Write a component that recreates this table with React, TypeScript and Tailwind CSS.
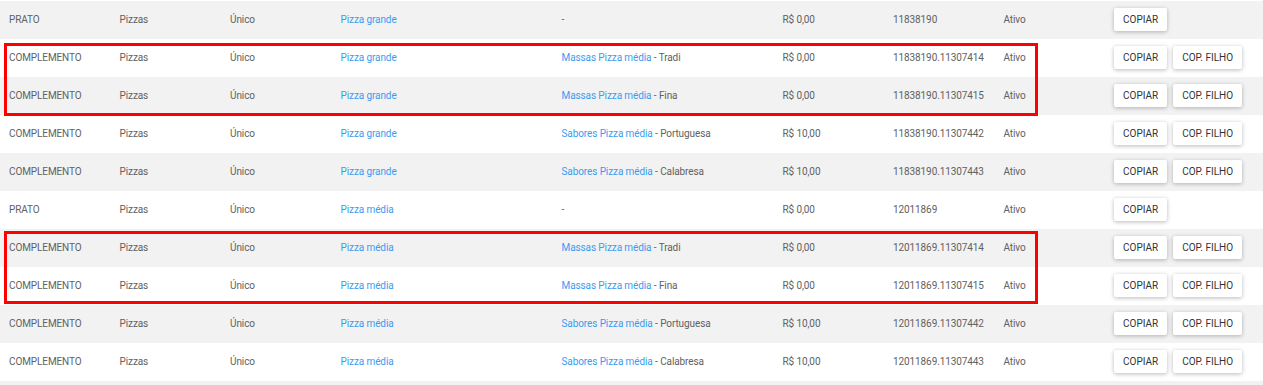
import React from "react";

type Row = {
	tipo: string;
	parent: string;
	item?: { group: string; name: string };
	preco: string;
	codigo: string;
	filho: boolean;
};

const rows: Row[] = [
	{ tipo: "PRATO", parent: "Pizza grande", preco: "R$ 0,00", codigo: "11838190", filho: false },
	{ tipo: "COMPLEMENTO", parent: "Pizza grande", item: { group: "Massas Pizza média", name: "Tradi" }, preco: "R$ 0,00", codigo: "11838190.11307414", filho: true },
	{ tipo: "COMPLEMENTO", parent: "Pizza grande", item: { group: "Massas Pizza média", name: "Fina" }, preco: "R$ 0,00", codigo: "11838190.11307415", filho: true },
	{ tipo: "COMPLEMENTO", parent: "Pizza grande", item: { group: "Sabores Pizza média", name: "Portuguesa" }, preco: "R$ 10,00", codigo: "11838190.11307442", filho: true },
	{ tipo: "COMPLEMENTO", parent: "Pizza grande", item: { group: "Sabores Pizza média", name: "Calabresa" }, preco: "R$ 10,00", codigo: "11838190.11307443", filho: true },
	{ tipo: "PRATO", parent: "Pizza média", preco: "R$ 0,00", codigo: "12011869", filho: false },
	{ tipo: "COMPLEMENTO", parent: "Pizza média", item: { group: "Massas Pizza média", name: "Tradi" }, preco: "R$ 0,00", codigo: "12011869.11307414", filho: true },
	{ tipo: "COMPLEMENTO", parent: "Pizza média", item: { group: "Massas Pizza média", name: "Fina" }, preco: "R$ 0,00", codigo: "12011869.11307415", filho: true },
	{ tipo: "COMPLEMENTO", parent: "Pizza média", item: { group: "Sabores Pizza média", name: "Portuguesa" }, preco: "R$ 10,00", codigo: "12011869.11307442", filho: true },
	{ tipo: "COMPLEMENTO", parent: "Pizza média", item: { group: "Sabores Pizza média", name: "Calabresa" }, preco: "R$ 10,00", codigo: "12011869.11307443", filho: true },
];

function Btn(props: { label: string }) {
	return (
		<button className="h-[23px] rounded-[2px] bg-white px-[9px] text-[10px] uppercase text-[#333] shadow-[0_1px_4px_rgba(0,0,0,0.28)]">
			{props.label}
		</button>
	);
}

function Highlight() {
	return <div className="pointer-events-none absolute left-[4px] h-[73px] w-[1034px] border-[3px] border-[#ff0000]" />;
}

export default function App() {
	return (
		<div
			className="relative bg-white pt-px text-[10px] tracking-[-0.1px] text-[#616161]"
			style={{ fontFamily: "Roboto, 'Liberation Sans', sans-serif" }}
		>
			{rows.map((r, i) => (
				<div
					key={i}
					className={
						"grid h-[38px] grid-cols-[110.5px_110.5px_110.5px_221px_221px_110.5px_110.5px_110.5px_1fr] items-center pb-[2px] " +
						(i % 2 === 0 ? "bg-[#f2f2f2]" : "bg-white")
					}
				>
					<div className="pl-[9px]">{r.tipo}</div>
					<div className="pl-[9px]">Pizzas</div>
					<div className="pl-[9px]">Único</div>
					<div className="pl-[9px] text-[#3a9bf0]">{r.parent}</div>
					<div className="pl-[9px]">
						{r.item ? (
							<>
								<span className="text-[#3a9bf0]">{r.item.group}</span> - {r.item.name}
							</>
						) : (
							"-"
						)}
					</div>
					<div className="pl-[9px]">{r.preco}</div>
					<div className="pl-[9px]">{r.codigo}</div>
					<div className="pl-[9px]">Ativo</div>
					<div className="flex gap-[6px] pl-[9px] tracking-normal">
						<Btn label="Copiar" />
						{r.filho && <Btn label="Cop. Filho" />}
					</div>
				</div>
			))}
			<div className="h-[4px] bg-[#f2f2f2]" />
			<div className="absolute top-[43px] left-0 right-0">
				<Highlight />
			</div>
			<div className="absolute top-[231px] left-0 right-0">
				<Highlight />
			</div>
		</div>
	);
}
